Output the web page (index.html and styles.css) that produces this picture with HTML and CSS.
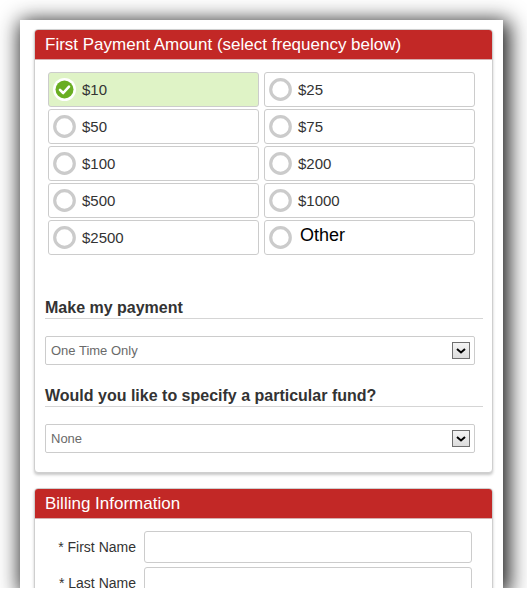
FILE: index.html
```html
<!DOCTYPE html>
<html>
<head>
<meta charset="utf-8">
<link rel="stylesheet" href="styles.css">
</head>
<body>
<div class="window">
  <section class="panel panel-amount">
    <div class="panel-head">First Payment Amount (select frequency below)</div>
    <div class="panel-body">
      <div class="amounts">
        <label class="opt checked"><svg class="radio" viewBox="0 0 23 23" width="23" height="23"><circle cx="11.5" cy="11.5" r="11.5" fill="#fff"/><circle cx="11.5" cy="11.5" r="9" fill="#6aae22"/><polyline points="7,11.8 10.2,15 16,8.6" fill="none" stroke="#fff" stroke-width="2.6" stroke-linecap="round" stroke-linejoin="round"/></svg><span>$10</span></label>
        <label class="opt"><svg class="radio" viewBox="0 0 23 23" width="23" height="23"><circle cx="11.5" cy="11.5" r="9.8" fill="#fff" stroke="#cbcbcb" stroke-width="3.2"/></svg><span>$25</span></label>
        <label class="opt"><svg class="radio" viewBox="0 0 23 23" width="23" height="23"><circle cx="11.5" cy="11.5" r="9.8" fill="#fff" stroke="#cbcbcb" stroke-width="3.2"/></svg><span>$50</span></label>
        <label class="opt"><svg class="radio" viewBox="0 0 23 23" width="23" height="23"><circle cx="11.5" cy="11.5" r="9.8" fill="#fff" stroke="#cbcbcb" stroke-width="3.2"/></svg><span>$75</span></label>
        <label class="opt"><svg class="radio" viewBox="0 0 23 23" width="23" height="23"><circle cx="11.5" cy="11.5" r="9.8" fill="#fff" stroke="#cbcbcb" stroke-width="3.2"/></svg><span>$100</span></label>
        <label class="opt"><svg class="radio" viewBox="0 0 23 23" width="23" height="23"><circle cx="11.5" cy="11.5" r="9.8" fill="#fff" stroke="#cbcbcb" stroke-width="3.2"/></svg><span>$200</span></label>
        <label class="opt"><svg class="radio" viewBox="0 0 23 23" width="23" height="23"><circle cx="11.5" cy="11.5" r="9.8" fill="#fff" stroke="#cbcbcb" stroke-width="3.2"/></svg><span>$500</span></label>
        <label class="opt"><svg class="radio" viewBox="0 0 23 23" width="23" height="23"><circle cx="11.5" cy="11.5" r="9.8" fill="#fff" stroke="#cbcbcb" stroke-width="3.2"/></svg><span>$1000</span></label>
        <label class="opt"><svg class="radio" viewBox="0 0 23 23" width="23" height="23"><circle cx="11.5" cy="11.5" r="9.8" fill="#fff" stroke="#cbcbcb" stroke-width="3.2"/></svg><span>$2500</span></label>
        <label class="opt other"><svg class="radio" viewBox="0 0 23 23" width="23" height="23"><circle cx="11.5" cy="11.5" r="9.8" fill="#fff" stroke="#cbcbcb" stroke-width="3.2"/></svg><span>Other</span></label>
      </div>

      <h3 class="field-title first">Make my payment</h3>
      <div class="select"><span>One Time Only</span><span class="drop"><svg viewBox="0 0 16 15" width="16" height="15"><polyline points="4,6 8,9.5 12,6" fill="none" stroke="#000" stroke-width="2"/></svg></span></div>

      <h3 class="field-title">Would you like to specify a particular fund?</h3>
      <div class="select"><span>None</span><span class="drop"><svg viewBox="0 0 16 15" width="16" height="15"><polyline points="4,6 8,9.5 12,6" fill="none" stroke="#000" stroke-width="2"/></svg></span></div>
    </div>
  </section>

  <section class="panel panel-billing">
    <div class="panel-head">Billing Information</div>
    <div class="billing-body">
      <div class="form-row"><span class="lbl">* First Name</span><span class="input"></span></div>
      <div class="form-row"><span class="lbl">* Last Name</span><span class="input"></span></div>
    </div>
  </section>
</div>
</body>
</html>
```

FILE: styles.css
```css
html, body {
  margin: 0;
  padding: 0;
  background: #fff;
}
body {
  padding: 20px 0 0 20px;
  font-family: "Liberation Sans", Arial, sans-serif;
  color: #333;
}
.window {
  width: 483px;
  height: 568px;
  background: #fff;
  overflow: hidden;
  box-shadow: 3px 4px 20px 3px rgba(0, 0, 0, 0.9);
  padding: 9px 0 0 14px;
  box-sizing: border-box;
}
.panel {
  width: 459px;
  box-sizing: border-box;
  border: 1px solid #cfcfcf;
  border-radius: 4px;
  background: #fff;
  box-shadow: 0 2px 3px rgba(0, 0, 0, 0.22);
  overflow: hidden;
}
.panel-head {
  height: 29px;
  background: #c22826;
  color: #fff;
  font-size: 17px;
  line-height: 29px;
  padding-left: 10px;
  border-bottom: 1px solid #d6b0b0;
}
.panel-body {
  padding: 12px 9px 19px 10px;
}
.amounts {
  margin-left: 3px;
  display: grid;
  grid-template-columns: 211px 211px;
  column-gap: 5px;
  row-gap: 2px;
}
.opt {
  height: 35px;
  box-sizing: border-box;
  border: 1px solid #cccccc;
  border-radius: 3px;
  display: flex;
  align-items: center;
  padding-left: 4px;
  gap: 6px;
  font-size: 15px;
  color: #333;
}
.opt.checked {
  background: #dff3c6;
}
.radio {
  display: block;
  flex: none;
}
.opt.other span {
  font-size: 18px;
  color: #000;
  margin-left: 2px;
  position: relative;
  top: -2px;
}
.field-title {
  margin: 21px 0 17px 0;
  font-size: 16px;
  line-height: 20px;
  font-weight: bold;
  color: #333;
  border-bottom: 1px solid #d5d5d5;
}
.field-title.first {
  margin-top: 43px;
}
.select {
  width: 430px;
  height: 29px;
  box-sizing: border-box;
  border: 1px solid #cccccc;
  border-radius: 2px;
  display: flex;
  align-items: center;
  justify-content: space-between;
  padding: 0 4px 0 5px;
  font-size: 13px;
  color: #6a6a6a;
}
.drop {
  width: 18px;
  height: 17px;
  box-sizing: border-box;
  border: 1px solid #6f6f6f;
  background: linear-gradient(#f4f4f4, #dcdcdc);
  display: flex;
  align-items: center;
  justify-content: center;
}
.drop svg {
  display: block;
}
.panel-billing {
  margin-top: 15px;
}
.billing-body {
  padding: 12px 0 20px 0;
  display: flex;
  flex-direction: column;
  gap: 4px;
}
.form-row {
  display: flex;
  align-items: center;
}
.lbl {
  width: 101px;
  flex: none;
  text-align: right;
  padding-right: 8px;
  box-sizing: content-box;
  font-size: 14px;
  color: #333;
}
.input {
  display: block;
  width: 328px;
  height: 32px;
  box-sizing: border-box;
  border: 1px solid #cccccc;
  border-radius: 3px;
}
```
